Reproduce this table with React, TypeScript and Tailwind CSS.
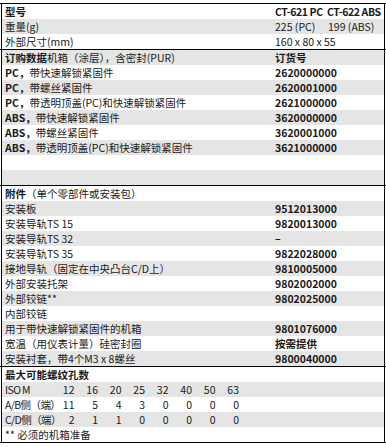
const font = { fontFamily: '"Noto Sans CJK SC", "Liberation Sans", sans-serif' };

type Row = { label: React.ReactNode; value?: React.ReactNode };

const Line = () => <div className="h-px w-[386px] bg-black" />;

const Rows = ({ rows, start = 0 }: { rows: Row[]; start?: number }) => (
  <div className="ml-px mr-px border-l border-r border-black">
    {rows.map((r, i) => (
      <div
        key={i}
        className={`flex h-[15px] items-center ${(i + start) % 2 === 1 ? "bg-[#e5e5e5]" : "bg-white"}`}
      >
        <div className="w-[273px] shrink-0 pl-[3px] whitespace-nowrap">{r.label}</div>
        <div className="whitespace-nowrap">{r.value}</div>
      </div>
    ))}
  </div>
);

const B = ({ children }: { children: React.ReactNode }) => <span className="font-bold">{children}</span>;

const isoHead = ["12", "16", "20", "25", "32", "40", "50", "63"];
const ab = ["11", "5", "4", "3", "0", "0", "0", "0"];
const cd = ["2", "1", "1", "0", "0", "0", "0", "0"];

const IsoRow = ({ label, vals, gray }: { label: string; vals: string[]; gray?: boolean }) => (
  <div className={`flex h-[15px] items-center ${gray ? "bg-[#e5e5e5]" : "bg-white"}`}>
    <div className="w-[49px] shrink-0 pl-[3px] whitespace-nowrap tracking-[-0.6px]">{label}</div>
    {vals.map((v, i) => (
      <div key={i} className="w-[23.5px] shrink-0 text-right">
        {v}
      </div>
    ))}
  </div>
);

export default function App() {
  return (
    <div className="w-[386px] h-[447px] bg-white pt-[3px] text-[10.5px] leading-[15px] text-[#1a1a1a]" style={font}>
      <Line />
      <Rows
        rows={[
          {
            label: <B>型号</B>,
            value: (
              <span className="flex font-bold tracking-[-0.4px]">
                <span className="w-[52px]">CT-621 PC</span>
                <span>CT-622 ABS</span>
              </span>
            ),
          },
          {
            label: "重量(g)",
            value: (
              <span className="flex">
                <span className="w-[53px]">225 (PC)</span>
                <span>199 (ABS)</span>
              </span>
            ),
          },
          { label: "外部尺寸(mm)", value: "160 x 80 x 55" },
        ]}
      />
      <Line />
      <Rows
        start={1}
        rows={[
          { label: <><B>订购数据</B>机箱（涂层），含密封(PUR)</>, value: <B>订货号</B> },
          { label: <><B>PC，</B>带快速解锁紧固件</>, value: <B>2620000000</B> },
          { label: <><B>PC，</B>带螺丝紧固件</>, value: <B>2620001000</B> },
          { label: <><B>PC，</B>带透明顶盖(PC)和快速解锁紧固件</>, value: <B>2621000000</B> },
          { label: <><B>ABS，</B>带快速解锁紧固件</>, value: <B>3620000000</B> },
          { label: <><B>ABS，</B>带螺丝紧固件</>, value: <B>3620001000</B> },
          { label: <><B>ABS，</B>带透明顶盖(PC)和快速解锁紧固件</>, value: <B>3621000000</B> },
          { label: "" },
          { label: "" },
        ]}
      />
      <Line />
      <Rows
        rows={[
          { label: <><B>附件</B>（单个零部件或安装包）</> },
          { label: "安装板", value: <B>9512013000</B> },
          { label: "安装导轨TS 15", value: <B>9820013000</B> },
          { label: "安装导轨TS 32", value: <B>–</B> },
          { label: "安装导轨TS 35", value: <B>9822028000</B> },
          { label: "接地导轨（固定在中央凸台C/D上）", value: <B>9810005000</B> },
          { label: "外部安装托架", value: <B>9802002000</B> },
          { label: "外部铰链**", value: <B>9802025000</B> },
          { label: "内部铰链" },
          { label: "用于带快速解锁紧固件的机箱", value: <B>9801076000</B> },
          { label: "宽温（用仪表计量）硅密封圈", value: <B>按需提供</B> },
          { label: "安装衬套，带4个M3 x 8螺丝", value: <B>9800040000</B> },
        ]}
      />
      <Line />
      <div className="ml-px mr-px border-l border-r border-black">
        <div className="flex h-[15px] items-center bg-white pl-[3px] font-bold">最大可能螺纹孔数</div>
        <IsoRow label="ISO M" vals={isoHead} gray />
        <IsoRow label="A/B侧（端）" vals={ab} />
        <IsoRow label="C/D侧（端）" vals={cd} gray />
        <div className="flex h-[15px] items-center bg-white pl-[3px]">** 必须的机箱准备</div>
      </div>
      <Line />
    </div>
  );
}
